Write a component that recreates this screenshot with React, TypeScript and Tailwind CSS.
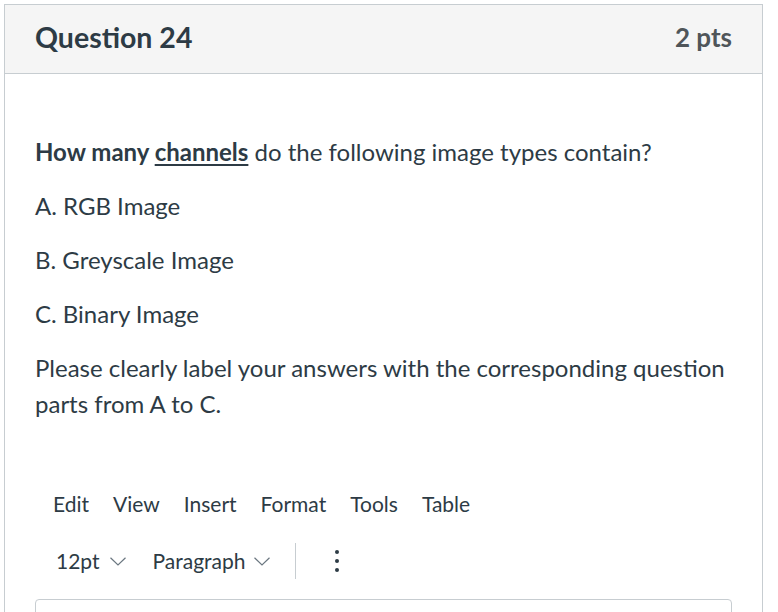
const options = ["A. RGB Image", "B. Greyscale Image", "C. Binary Image"];
const menu = ["Edit", "View", "Insert", "Format", "Tools", "Table"];

function Caret() {
  return (
    <svg width="16" height="9" viewBox="0 0 16 9" className="text-[#6b7780]">
      <polyline points="0.5,0.8 8,8 15.5,0.8" fill="none" stroke="currentColor" strokeWidth="1.2" />
    </svg>
  );
}

export default function App() {
  return (
    <div className="h-[612px] w-[778px] overflow-hidden bg-white pl-[4px] pt-[4px] font-['Lato',sans-serif] text-[#2d3b45]">
      <div className="h-[700px] w-[759px] border border-[#c7cdd1]">
        <div className="flex h-[69px] items-center justify-between border-b border-[#c7cdd1] bg-[#f5f5f5] px-[30px] pb-[4px]">
          <h2 className="text-[28.5px] font-bold leading-[36px]">Question 24</h2>
          <span className="text-[26px] font-bold leading-[36px] text-[#4f5559]">2 pts</span>
        </div>

        <div className="px-[30px] pt-[60px] text-[24px] leading-[36px]">
          <p className="mb-[18px]">
            <strong>
              How many <u className="decoration-2 underline-offset-[3px]">channels</u>
            </strong>{" "}
            do the following image types contain?
          </p>
          {options.map((o) => (
            <p key={o} className="mb-[18px]">
              {o}
            </p>
          ))}
          <p>
            Please clearly label your answers with the corresponding question parts from A to C.
          </p>

          <div className="mt-[68px] flex items-center gap-[24px] pl-[18px] text-[21px] leading-[28px]">
            {menu.map((m) => (
              <span key={m}>{m}</span>
            ))}
          </div>

          <div className="mt-[25px] flex h-[36px] items-center pl-[21px] text-[21px]">
            <span>12pt</span>
            <span className="ml-[10px]">
              <Caret />
            </span>
            <span className="ml-[27px]">Paragraph</span>
            <span className="ml-[9px]">
              <Caret />
            </span>
            <div className="ml-[25px] h-[36px] w-px bg-[#c7cdd1]" />
            <div className="ml-[39px] flex flex-col items-center gap-[5px]">
              <span className="h-[4px] w-[4px] rounded-full bg-[#2d3b45]" />
              <span className="h-[4px] w-[4px] rounded-full bg-[#2d3b45]" />
              <span className="h-[4px] w-[4px] rounded-full bg-[#2d3b45]" />
            </div>
          </div>

          <div className="mt-[20px] h-[200px] rounded-[4px] border border-[#c7cdd1]" />
        </div>
      </div>
    </div>
  );
}
